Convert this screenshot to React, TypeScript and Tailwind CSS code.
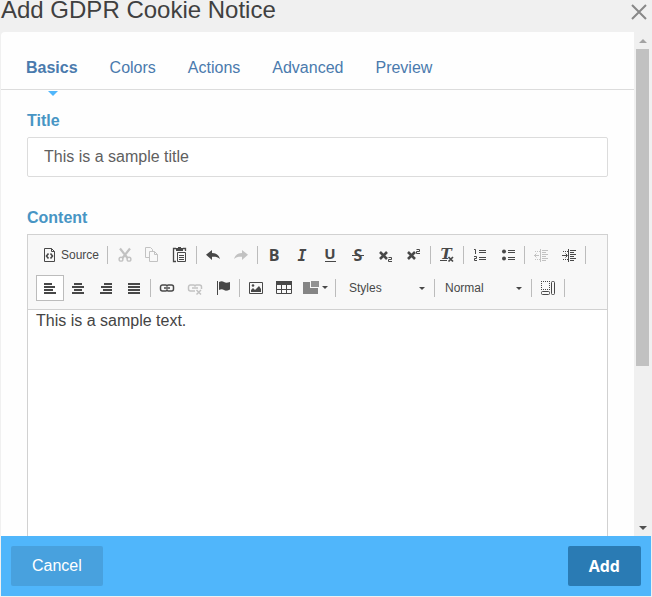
import { useState } from "react";
import type { ReactNode } from "react";

const tabs = ["Basics", "Colors", "Actions", "Advanced", "Preview"];

function Icon({ children }: { children: ReactNode }) {
  return (
    <svg width="16" height="16" viewBox="0 0 16 16" fill="none" stroke="currentColor" aria-hidden="true" className="shrink-0 overflow-visible">
      {children}
    </svg>
  );
}

function Glyph({ children, size = 16, x = 8, y = 14, family = "Open Sans", italic = false }: {
  children: string; size?: number; x?: number; y?: number; family?: string; italic?: boolean;
}) {
  return (
    <text x={x} y={y} fontSize={size} fontWeight="700" fontFamily={`"${family}", sans-serif`} fontStyle={italic ? "italic" : "normal"} textAnchor="middle" fill="currentColor" stroke="none">
      {children}
    </text>
  );
}

function Tool({ label, disabled, active, text, children }: {
  label: string; disabled?: boolean; active?: boolean; text?: string; children: ReactNode;
}) {
  return (
    <button
      type="button"
      aria-label={label}
      title={label}
      disabled={disabled}
      aria-pressed={active}
      className={`flex h-[26px] shrink-0 items-center gap-[3px] border px-[5px] text-xs text-[#484848] disabled:text-[#c2c2c2] ${active ? "border-[#bcbcbc] bg-white" : "border-transparent"}`}
    >
      <Icon>{children}</Icon>
      {text && <span>{text}</span>}
    </button>
  );
}

function Separator() {
  return <span aria-hidden="true" className="mx-[2px] h-[18px] w-px shrink-0 bg-[#bcbcbc]" />;
}

function Combo({ label, width }: { label: string; width: string }) {
  return (
    <div className={`relative shrink-0 ${width}`}>
      <select aria-label={label} className="h-[26px] w-full appearance-none bg-transparent pl-2 text-xs text-[#484848] outline-none">
        <option>{label}</option>
      </select>
      <svg width="6" height="4" viewBox="0 0 6 4" className="pointer-events-none absolute top-[12px] right-[7px]" aria-hidden="true">
        <path d="M0 0h6L3 3z" fill="#484848" />
      </svg>
    </div>
  );
}

function AlignLines({ rows }: { rows: [number, number][] }) {
  return (
    <>
      {rows.map(([x, w], i) => (
        <rect key={i} x={x} y={3 + i * 3} width={w} height="2" fill="currentColor" stroke="none" />
      ))}
    </>
  );
}

function IndentLines() {
  return (
    <>
      <path d="M9 3.500h6M9 5.500h4M9 7.500h6M9 9.500h4M9 11.500h6M9 13.500h4" />
      <path d="M7.500 2v13" />
      <path d="M2 4.500h5M2 12.500h5" strokeDasharray="1 1" />
    </>
  );
}

function Toolbar() {
  return (
    <div className="flex flex-col gap-[7px] border-b border-[#d1d1d1] bg-[#f8f8f8] px-2 pt-[7px] pb-2">
      <div className="flex items-center">
        <Tool label="Source" text="Source">
          <path d="M2.500 1.500h7l3 3v10h-10z" />
          <path d="M9.500 1.500v3h3" />
          <path d="M6.500 6.500 4.500 9l2 2.500M8.500 6.500l2 2.500-2 2.500" strokeWidth="1.600" />
        </Tool>
        <Separator />
        <Tool label="Cut" disabled>
          <path d="M4 1.500 11.500 11M14 1.500 6.500 11" strokeWidth="2.200" />
          <circle cx="5" cy="12.200" r="1.900" strokeWidth="1.400" />
          <circle cx="13" cy="12.200" r="1.900" strokeWidth="1.400" />
        </Tool>
        <Tool label="Copy" disabled>
          <path d="M5 10.500H1.500v-10h5l2 2V4" />
          <path d="M5.500 4.500h5l3 3v7h-8z" />
          <path d="M10.500 4.500v3h3" />
        </Tool>
        <Tool label="Paste">
          <path d="M4 1.500H1.500v13H4M11 1.500h2.500V4" strokeWidth="1.300" />
          <path d="M4 4V1h2V0h3v1h2v3z" fill="currentColor" stroke="none" />
          <path d="M5.500 5.500h8v9h-8z" />
          <path d="M7 8.500h5M7 10.500h5M7 12.500h5" />
        </Tool>
        <Separator />
        <Tool label="Undo">
          <path d="M7 3v3c4.500 0 7 2.500 8 6-2-2-4.500-2.500-8-2.300V13L1 7.800z" fill="currentColor" stroke="none" />
        </Tool>
        <Tool label="Redo" disabled>
          <path d="M9 3v3c-4.500 0-7 2.500-8 6 2-2 4.500-2.500 8-2.300V13l6-5.200z" fill="currentColor" stroke="none" />
        </Tool>
        <Separator />
        <Tool label="Bold"><Glyph>B</Glyph></Tool>
        <Tool label="Italic"><Glyph family="DejaVu Sans Mono" italic size={15} y={14}>I</Glyph></Tool>
        <Tool label="Underline">
          <Glyph size={15} y={12}>U</Glyph>
          <path d="M3 14.500h11" />
        </Tool>
        <Tool label="Strikethrough">
          <Glyph>S</Glyph>
          <path d="M2 8.500h12" />
        </Tool>
        <Tool label="Subscript">
          <path d="m2 5 7 7M9 5l-7 7" strokeWidth="2.600" />
          <path d="M10.500 10.500h3v2h-3v2H14" />
        </Tool>
        <Tool label="Superscript">
          <path d="m2 5 7 7M9 5l-7 7" strokeWidth="2.600" />
          <path d="M10.500 2.500h3v2h-3v2H14" />
        </Tool>
        <Separator />
        <Tool label="Remove Format">
          <Glyph family="DejaVu Serif" italic size={15} x={7} y={12}>T</Glyph>
          <path d="M1 13.500h7" />
          <path d="m9.500 10 4.500 4.500M14 10l-4.500 4.500" strokeWidth="1.700" />
        </Tool>
        <Separator />
        <Tool label="Numbered List">
          <path d="M2 2.500h1.500V7M2 9.500h2.500v2h-2v2H5" />
          <path d="M7 3.500h7M7 5.500h7M7 10.500h7M7 12.500h7" />
        </Tool>
        <Tool label="Bulleted List">
          <circle cx="4" cy="4.500" r="2" fill="currentColor" stroke="none" />
          <circle cx="4" cy="11.500" r="2" fill="currentColor" stroke="none" />
          <path d="M8 3.500h7M8 5.500h7M8 10.500h7M8 12.500h7" />
        </Tool>
        <Separator />
        <Tool label="Decrease Indent" disabled>
          <IndentLines />
          <path d="M1 8.500h5M3.500 6.500l-2 2 2 2" />
        </Tool>
        <Tool label="Increase Indent">
          <IndentLines />
          <path d="M1 8.500h5M4.500 6.500l2 2-2 2" />
        </Tool>
        <Separator />
      </div>
      <div className="flex items-center">
        <Tool label="Align Left" active><AlignLines rows={[[2, 8], [2, 11], [2, 9], [2, 12]]} /></Tool>
        <Tool label="Center"><AlignLines rows={[[4, 8], [2, 12], [4, 8], [2, 12]]} /></Tool>
        <Tool label="Align Right"><AlignLines rows={[[6, 8], [3, 11], [5, 9], [2, 12]]} /></Tool>
        <Tool label="Justify"><AlignLines rows={[[2, 12], [2, 12], [2, 12], [2, 12]]} /></Tool>
        <Separator />
        <Tool label="Link">
          <path d="M8.500 9.500a2 2 0 0 1-2 1.500H3.500a2 2 0 0 1-2-2V7a2 2 0 0 1 2-2h3a2 2 0 0 1 2 1.500M7.500 9.500a2 2 0 0 0 2 1.500h3a2 2 0 0 0 2-2V7a2 2 0 0 0-2-2h-3a2 2 0 0 0-2 1.500M5 8h6" strokeWidth="1.500" />
        </Tool>
        <Tool label="Unlink" disabled>
          <path d="M8 11H3.500a2 2 0 0 1-2-2V7a2 2 0 0 1 2-2h3a2 2 0 0 1 2 1.500M14.500 9V7a2 2 0 0 0-2-2h-3a2 2 0 0 0-2 1.500M5 8h6" strokeWidth="1.500" />
          <path d="m9.500 10 4.500 4.500M14 10l-4.500 4.500" strokeWidth="1.500" />
        </Tool>
        <Tool label="Anchor">
          <path d="M2.500 1v14" />
          <path d="M4 2c2-1 3.500-1 5 0s3 1 6 0v7.500c-3 1.500-4.500 1.500-6 .500s-3-1-5 0z" fill="currentColor" stroke="none" />
        </Tool>
        <Separator />
        <Tool label="Image">
          <path d="M1.500 2.500h13v11h-13z" />
          <circle cx="5" cy="5.500" r="1.300" fill="currentColor" stroke="none" />
          <path d="M3 12V10l2-2 2 2 4-4 2 3v3z" fill="currentColor" stroke="none" />
        </Tool>
        <Tool label="Table">
          <path d="M0 1h16v4H0z" fill="currentColor" stroke="none" />
          <path d="M.500 4.500h15v9H.500zM.500 9.500h15M5.500 4.500v9M10.500 4.500v9" />
        </Tool>
        <button type="button" aria-label="Templates" className="flex h-[26px] w-[35px] shrink-0 items-center gap-[3px] pl-[5px]">
          <svg width="16" height="16" viewBox="0 0 16 16" aria-hidden="true">
            <path d="M0 2h7v6h8v6H0z" fill="#858585" />
            <path d="M8 1h8v6H8z" fill="#929292" />
          </svg>
          <svg width="6" height="4" viewBox="0 0 6 4" aria-hidden="true">
            <path d="M0 0h6L3 3z" fill="#484848" />
          </svg>
        </button>
        <Separator />
        <Combo label="Styles" width="w-[94px] pl-[3px]" />
        <Separator />
        <Combo label="Normal" width="w-[92px]" />
        <Separator />
        <Tool label="Show Blocks">
          <path d="M1 1.500h9M1 9.500h9M1.500 1v9M9.500 1v9" strokeDasharray="1 1" />
          <rect x="11.500" y="1.500" width="3" height="13" rx="1" />
          <rect x="1.500" y="11.500" width="8" height="3" rx="1" />
        </Tool>
        <Separator />
      </div>
    </div>
  );
}

export default function App() {
  const [tab, setTab] = useState("Basics");
  return (
    <div className="flex h-screen flex-col overflow-hidden bg-[#f0f0f0] px-px pb-px font-['Liberation_Sans',Arial,sans-serif] text-base">
      <header className="flex h-8 shrink-0 items-start justify-between pr-1">
        <h1 className="text-2xl leading-5 text-[#404040]">Add GDPR Cookie Notice</h1>
        <button type="button" aria-label="Close" className="pt-1">
          <svg width="16" height="16" viewBox="0 0 16 16" stroke="#888" strokeWidth="2" aria-hidden="true">
            <path d="m1 1 14 14M15 1 1 15" />
          </svg>
        </button>
      </header>

      <div className="flex min-h-0 flex-1">
        <main className="min-w-0 flex-1 overflow-hidden rounded-tl bg-[#fefefe]">
          <nav className="flex h-[58px] gap-8 border-b border-[#dcdcdc] px-[25px] pt-[14px]">
            {tabs.map((t) => (
              <button
                key={t}
                type="button"
                onClick={() => setTab(t)}
                className={`relative h-11 text-[#4a7aad] ${t === tab ? "font-bold" : ""}`}
              >
                {t}
                {t === tab && (
                  <svg width="10" height="5" viewBox="0 0 10 5" aria-hidden="true" className="absolute top-[45px] left-[22px]">
                    <path d="M0 0h10L5 5z" fill="#50b6fb" />
                  </svg>
                )}
              </button>
            ))}
          </nav>
          <form className="px-[26px] pt-[19px]" onSubmit={(e) => e.preventDefault()}>
            <label htmlFor="title" className="block font-bold text-[#4795c4]">Title</label>
            <input
              id="title"
              defaultValue="This is a sample title"
              className="mt-1 block h-10 w-full rounded-xs border border-[#dcdcdc] bg-white px-4 text-[#606060] outline-none"
            />
            <label htmlFor="content" className="mt-[29px] block font-bold text-[#4795c4]">Content</label>
            <div className="mt-1 border border-[#d1d1d1] bg-white">
              <Toolbar />
              <textarea id="content" defaultValue="This is a sample text." className="block h-80 w-full resize-none px-2 leading-[22px] text-[#444] outline-none" />
            </div>
          </form>
        </main>
        <div aria-hidden="true" className="flex w-[17px] shrink-0 flex-col items-center">
          <span className="flex h-[17px] shrink-0 items-center">
            <svg width="8" height="4" viewBox="0 0 8 4"><path d="M0 4h8L4 0z" fill="#a3a3a3" /></svg>
          </span>
          <div className="w-full flex-1 px-[2px]">
            <div className="h-[67.5%] bg-[#c1c1c1]" />
          </div>
          <span className="flex h-[17px] shrink-0 items-center">
            <svg width="8" height="4" viewBox="0 0 8 4"><path d="M0 0h8L4 4z" fill="#505050" /></svg>
          </span>
        </div>
      </div>

      <footer className="flex h-[60px] shrink-0 items-center justify-between bg-[#50b6fb] px-[10px]">
        <button type="button" className="h-10 rounded-xs bg-[#48a1de] px-[21px] text-white">Cancel</button>
        <button type="button" className="h-10 rounded-xs bg-[#2a7bb4] px-[21px] font-['Open_Sans',sans-serif] font-bold text-white">Add</button>
      </footer>
    </div>
  );
}
